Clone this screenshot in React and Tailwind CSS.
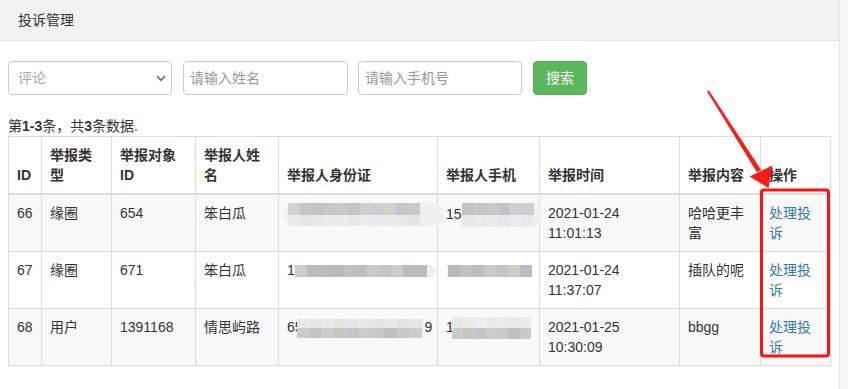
import React from "react";

const FONT = { fontFamily: '"Liberation Sans", "Noto Sans CJK SC", sans-serif' };

function Redact({ rows, cell = 12, h, haloL = 0, haloR = 0, className = "" }) {
  return (
    <span
      className={"relative inline-flex flex-col align-middle rounded-[10px] bg-[#f0f0f0] " + className}
      style={{ paddingLeft: haloL, paddingRight: haloR }}
    >
      {rows.map((r, i) => (
        <span key={i} className="flex">
          {r.map((c, j) => (
            <span key={j} style={{ width: cell, height: h / rows.length, background: c }} />
          ))}
        </span>
      ))}
    </span>
  );
}

const A = ["#d3d3d3", "#c6c6c6", "#c3c3c3", "#c7c7c7", "#cbc9c6", "#c2c4c7", "#d0d0d0", "#cecdd2", "#d3d3ce", "#c6c8cd", "#cacaca", "#e6e6e6"];
const B = ["#ebebeb", "#e6e6e4", "#e9e9e9", "#eaeaea", "#ececec", "#e8e8e8", "#ededed", "#eaeaec", "#ececec", "#e9e9ea", "#e4e4e4", "#f0f0f0"];
const C = ["#c9cdd0", "#bbbbbb", "#bcbcbc", "#b9b9b9", "#c4c0bd", "#bcbdbf", "#cacaca", "#c6c4c9", "#cdccc7", "#b9bcc1", "#bdbbbb", "#e3e3e3"];
const D = ["#cbcbcb", "#c4c4c4", "#cbcbcb", "#c8c6c3", "#c2c6c9", "#cdcbca", "#c9c9c9", "#bfbfbf", "#c9c9cb", "#cdcdcd", "#d0d0d0"];

const rows = [
  { id: 66, type: "缘圈", target: "654", name: "笨白瓜", t1: "2021-01-24", t2: "11:01:13", content: "哈哈更丰富", striped: true, k: 0 },
  { id: 67, type: "缘圈", target: "671", name: "笨白瓜", t1: "2021-01-24", t2: "11:37:07", content: "插队的呢", striped: false, k: 1 },
  { id: 68, type: "用户", target: "1391168", name: "情思屿路", t1: "2021-01-25", t2: "10:30:09", content: "bbgg", striped: true, k: 2 },
];

function IdCell({ k }) {
  if (k === 0)
    return <Redact className="-ml-[3px]" rows={[A.slice(0, 11), B.slice(0, 11)]} h={23} haloL={4} haloR={24} />;
  if (k === 1)
    return (
      <span className="whitespace-nowrap">
        1<Redact rows={[C.slice(0, 11)]} h={12} haloR={9} />
      </span>
    );
  return (
    <span className="whitespace-nowrap">
      65
      <Redact className="-ml-[6px]" rows={[["#e8e8e8", "#e6e6e6", "#e9e9e9", "#e4e4e4", "#e6e6e6", "#e8e8e8", "#e5e5e5", "#e7e7e7", "#e3e3e3", "#e6e6e6"], D.slice(0, 10)]} h={19} cell={12.5} haloR={3} />
      9
    </span>
  );
}

function PhoneCell({ k }) {
  if (k === 0)
    return (
      <span className="whitespace-nowrap">
        15<Redact rows={[A.slice(2, 8), B.slice(2, 8)]} h={24} haloR={8} />
      </span>
    );
  if (k === 1)
    return (
      <span className="whitespace-nowrap text-[#bbb]">
        1
        <Redact className="-ml-[6px]" rows={[C.slice(3, 10)]} h={12} />
      </span>
    );
  return (
    <span className="whitespace-nowrap">
      1
      <Redact className="-ml-[2px]" rows={[["#e9e9e9", "#ececec", "#eeeeee", "#ebebeb", "#ededed", "#eaeaea", "#ececec"], D.slice(2, 9)]} h={22} cell={11.3} />
    </span>
  );
}

export default function App() {
  const th = "border border-[#ddd] border-b-2 px-2 py-2 align-bottom text-left font-bold leading-[20px]";
  const td = "border border-[#ddd] px-2 py-2 align-top leading-[20px]";
  return (
    <div className="relative flex h-[389px] w-[848px] overflow-hidden bg-white text-[14px] text-[#333]" style={FONT}>
      <div className="w-[840px] border-r border-[#e6e6e6]">
        <div className="flex h-[41px] items-center border-b border-[#e6e6e6] bg-[#f2f2f2] pl-[18px]">投诉管理</div>
        <div className="px-2">
          <div className="mt-[20px] flex h-[34px] items-center">
            <div className="relative flex h-[34px] w-[164px] items-center rounded border border-[#ccc] pl-[9px] text-[#aaa]">
              评论
              <svg className="absolute right-[5px] top-[13px]" width="10" height="7" viewBox="0 0 10 7">
                <path d="M1 1.2 L5 5.2 L9 1.2" fill="none" stroke="#777" strokeWidth="1.8" />
              </svg>
            </div>
            <div className="ml-[11px] flex h-[34px] w-[165px] items-center rounded border border-[#ccc] pl-[6px] text-[#999]">请输入姓名</div>
            <div className="ml-[10px] flex h-[34px] w-[164px] items-center rounded border border-[#ccc] pl-[6px] text-[#999]">请输入手机号</div>
            <div className="ml-[11px] flex h-[34px] w-[54px] items-center justify-center rounded border border-[#4cae4c] bg-[#5cb85c] text-white">搜索</div>
          </div>
          <div className="mt-[21px] h-[20px] leading-[20px]">
            第<b>1-3</b>条，共<b>3</b>条数据.
          </div>
          <table className="w-[822px] table-fixed border-collapse">
            <colgroup>
              <col className="w-[33px]" />
              <col className="w-[70px]" />
              <col className="w-[84px]" />
              <col className="w-[83px]" />
              <col className="w-[159px]" />
              <col className="w-[102px]" />
              <col className="w-[140px]" />
              <col className="w-[81px]" />
              <col className="w-[70px]" />
            </colgroup>
            <thead>
              <tr>
                <th className={th}>ID</th>
                <th className={th}>举报类型</th>
                <th className={th}>举报对象ID</th>
                <th className={th}>举报人姓名</th>
                <th className={th}>举报人身份证</th>
                <th className={th}>举报人手机</th>
                <th className={th}>举报时间</th>
                <th className={th}>举报内容</th>
                <th className={th}>操作</th>
              </tr>
            </thead>
            <tbody>
              {rows.map((r) => (
                <tr key={r.id} className={r.striped ? "bg-[#f9f9f9]" : "bg-white"}>
                  <td className={td}>{r.id}</td>
                  <td className={td}>{r.type}</td>
                  <td className={td}>{r.target}</td>
                  <td className={td}>{r.name}</td>
                  <td className={td + " overflow-visible"}>
                    <IdCell k={r.k} />
                  </td>
                  <td className={td + " overflow-visible"}>
                    <PhoneCell k={r.k} />
                  </td>
                  <td className={td}>
                    {r.t1}
                    <br />
                    {r.t2}
                  </td>
                  <td className={td}>{r.content}</td>
                  <td className={td}>
                    <span className="text-[#337ab7]">处理投诉</span>
                  </td>
                </tr>
              ))}
            </tbody>
          </table>
        </div>
      </div>
      <div className="flex-1 bg-[#f7f7f7]" />
      <svg className="pointer-events-none absolute left-0 top-0" width="848" height="389" viewBox="0 0 848 389">
        <polygon points="708.9,90.5 707.1,91.5 756.9,172.3 761.1,169.7" fill="#ff1a1a" />
        <polygon points="749.5,176.5 772.5,165.5 768.5,188" fill="#ff1a1a" />
        <rect x="761.5" y="190" width="67" height="166" rx="2.5" fill="none" stroke="#ff1111" strokeWidth="3" />
      </svg>
    </div>
  );
}
